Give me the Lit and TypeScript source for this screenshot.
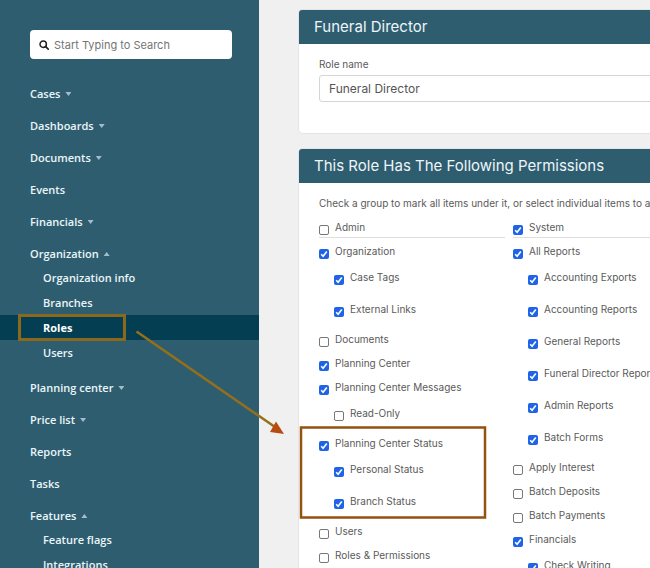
import { LitElement, html, svg, css, nothing } from "lit";
import { customElement, property, state } from "lit/decorators.js";
import { classMap } from "lit/directives/class-map.js";

interface NavItem {
  label: string;
  menu?: boolean;
  children?: string[];
}

interface Permission {
  label: string;
  checked: boolean;
  level: "head" | "group" | "child";
}

const NAV: NavItem[] = [
  { label: "Cases", menu: true },
  { label: "Dashboards", menu: true },
  { label: "Documents", menu: true },
  { label: "Events" },
  { label: "Financials", menu: true },
  {
    label: "Organization",
    menu: true,
    children: ["Organization info", "Branches", "Roles", "Users"],
  },
  { label: "Planning center", menu: true },
  { label: "Price list", menu: true },
  { label: "Reports" },
  { label: "Tasks" },
  { label: "Features", menu: true, children: ["Feature flags", "Integrations"] },
];

const head = (label: string, checked = true): Permission => ({ label, checked, level: "head" });
const group = (label: string, checked = true): Permission => ({ label, checked, level: "group" });
const child = (label: string, checked = true): Permission => ({ label, checked, level: "child" });

const COLUMNS: Permission[][] = [
  [
    head("Admin", false),
    group("Organization"),
    child("Case Tags"),
    child("External Links"),
    group("Documents", false),
    group("Planning Center"),
    group("Planning Center Messages"),
    child("Read-Only", false),
    group("Planning Center Status"),
    child("Personal Status"),
    child("Branch Status"),
    group("Users", false),
    group("Roles & Permissions", false),
  ],
  [
    head("System"),
    group("All Reports"),
    child("Accounting Exports"),
    child("Accounting Reports"),
    child("General Reports"),
    child("Funeral Director Reports"),
    child("Admin Reports"),
    child("Batch Forms"),
    group("Apply Interest", false),
    group("Batch Deposits", false),
    group("Batch Payments", false),
    group("Financials"),
    child("Check Writing"),
  ],
];

@customElement("side-nav")
export class SideNav extends LitElement {
  @property() current = "Roles";

  static styles = css`
    :host {
      display: block;
      background: #2f5d70;
      font: 600 11px/20px "Open Sans", sans-serif;
      overflow: hidden;
    }
    .search {
      display: flex;
      align-items: center;
      gap: 5px;
      height: 29px;
      margin: 30px 27px 25px 30px;
      padding: 0 9px;
      box-sizing: border-box;
      background: #fff;
      border-radius: 4px;
    }
    .search svg {
      flex: none;
      width: 10px;
      height: 10px;
    }
    .search input {
      flex: 1;
      min-width: 0;
      padding: 0;
      border: 0;
      outline: 0;
      background: none;
      color: #555;
      font: 400 11px/16px Inter, sans-serif;
    }
    .search input::placeholder {
      color: #757575;
      opacity: 1;
    }
    ul {
      list-style: none;
      margin: 0;
      padding: 0;
    }
    .menu {
      display: flex;
      flex-direction: column;
      gap: 12px;
    }
    a {
      color: #e9f6f8;
      text-decoration: none;
    }
    .top {
      display: flex;
      align-items: center;
      gap: 5px;
      padding-left: 30px;
    }
    .caret {
      width: 6px;
      height: 4px;
      background: #a3bcc9;
      clip-path: polygon(0 0, 100% 0, 50% 100%);
    }
    .caret.open {
      clip-path: polygon(50% 0, 100% 100%, 0 100%);
    }
    .sub {
      margin: 1px 0;
    }
    .sub a {
      display: block;
      padding-left: 43px;
      line-height: 25px;
    }
    .sub a.current {
      background: #033e52;
      color: #fff;
      font-weight: 700;
    }
  `;

  render() {
    return html`
      <label class="search">
        <svg viewBox="0 0 10 10" fill="none" stroke="#222" aria-hidden="true">
          <circle cx="4.2" cy="4.2" r="3.2" stroke-width="1.5" />
          <path d="M6.7 6.7 9.2 9.2" stroke-width="1.7" stroke-linecap="round" />
        </svg>
        <input type="search" placeholder="Start Typing to Search" aria-label="Search" />
      </label>
      <nav>
        <ul class="menu">
          ${NAV.map(
            (item) => html`<li>
              <a class="top" href="#"
                >${item.label}${item.menu
                  ? html`<span class=${classMap({ caret: true, open: !!item.children })}></span>`
                  : nothing}</a
              >
              ${item.children
                ? html`<ul class="sub">
                    ${item.children.map(
                      (name) => html`<li>
                        <a href="#" class=${classMap({ current: name === this.current })}>${name}</a>
                      </li>`
                    )}
                  </ul>`
                : nothing}
            </li>`
          )}
        </ul>
      </nav>
    `;
  }
}

@customElement("role-panel")
export class RolePanel extends LitElement {
  @property() heading = "";

  static styles = css`
    :host {
      display: block;
      background: #fff;
      border-radius: 4px;
      box-shadow: 0 0 0 1px #e2e4e5;
    }
    h2 {
      margin: 0;
      padding: 0 15px;
      border-radius: 3px 3px 0 0;
      background: #2f5d70;
      color: #eef5f8;
      font: 400 15px/34px Inter, sans-serif;
    }
    .body {
      padding: 12px 20px 31px;
    }
  `;

  render() {
    return html`<h2>${this.heading}</h2>
      <div class="body"><slot></slot></div>`;
  }
}

@customElement("permission-row")
export class PermissionRow extends LitElement {
  @property({ attribute: false }) item!: Permission;

  static styles = css`
    :host {
      display: block;
    }
    label {
      display: flex;
      gap: 6px;
      height: 24px;
      line-height: 24px;
    }
    .head {
      height: 22px;
      margin-bottom: 1px;
      border-bottom: 1px solid #dedede;
    }
    .child {
      height: 30px;
      padding: 2px 0 0 15px;
    }
    input {
      appearance: none;
      flex: none;
      width: 10px;
      height: 10px;
      margin: 10px 0 0;
      box-sizing: border-box;
      border: 1px solid #777;
      border-radius: 2px;
      background: #fff;
    }
    input:checked {
      border: 0;
      background: #1f64e6
        url("data:image/svg+xml,%3Csvg xmlns='http://www.w3.org/2000/svg' viewBox='0 0 10 10'%3E%3Cpath d='M2.2 5.3 4.1 7.3 7.8 2.6' fill='none' stroke='white' stroke-width='1.6'/%3E%3C/svg%3E");
    }
    span {
      white-space: nowrap;
    }
  `;

  render() {
    return html`<label class=${this.item.level}>
      <input type="checkbox" .checked=${this.item.checked} />
      <span>${this.item.label}</span>
    </label>`;
  }
}

@customElement("app-root")
export class AppRoot extends LitElement {
  @state() private roleName = "Funeral Director";

  static styles = css`
    :host {
      display: flex;
      position: relative;
      height: 100vh;
      overflow: hidden;
      background: #f0f0f1;
      color: #5a5a5a;
      font: 400 10px/16px Inter, sans-serif;
    }
    side-nav {
      flex: 0 0 259px;
    }
    main {
      flex: 1;
      min-width: 0;
      padding: 10px 0 0 40px;
      overflow: hidden;
    }
    role-panel {
      min-width: 420px;
      margin-bottom: 16px;
    }
    .field {
      display: block;
    }
    .field input {
      display: block;
      width: 100%;
      height: 27px;
      margin-top: 3px;
      padding: 0 9px;
      box-sizing: border-box;
      border: 1px solid #d5d5d5;
      border-radius: 3px;
      background: #fff;
      color: #555;
      font: 400 12px/16px Inter, sans-serif;
    }
    .hint {
      margin: 0 0 4px;
      white-space: nowrap;
    }
    .columns {
      display: grid;
      grid-template-columns: 1fr 1fr;
      gap: 8px;
    }
    .notes {
      position: absolute;
      top: 0;
      left: 0;
      width: 100%;
      height: 100%;
      pointer-events: none;
    }
  `;

  private renderNotes() {
    return svg`
      <rect x="19.5" y="315.5" width="105" height="24" fill="none" stroke="#8c681d" stroke-width="3" />
      <rect x="301" y="427.5" width="184" height="90" fill="none" stroke="#94520f" stroke-width="2.5" />
      <path d="M136.5 331.5 275 427" stroke="#95701b" stroke-width="2.5" fill="none" />
      <path d="M284 434 270 432 276 421.5Z" fill="#b84c10" />
    `;
  }

  render() {
    return html`
      <side-nav></side-nav>
      <main>
        <role-panel heading=${this.roleName}>
          <label class="field"
            >Role name
            <input type="text" .value=${this.roleName} />
          </label>
        </role-panel>
        <role-panel heading="This Role Has The Following Permissions">
          <p class="hint">
            Check a group to mark all items under it, or select individual items to add them
          </p>
          <div class="columns">
            ${COLUMNS.map(
              (rows) => html`<div>
                ${rows.map((row) => html`<permission-row .item=${row}></permission-row>`)}
              </div>`
            )}
          </div>
        </role-panel>
      </main>
      <svg class="notes" aria-hidden="true">${this.renderNotes()}</svg>
    `;
  }
}
